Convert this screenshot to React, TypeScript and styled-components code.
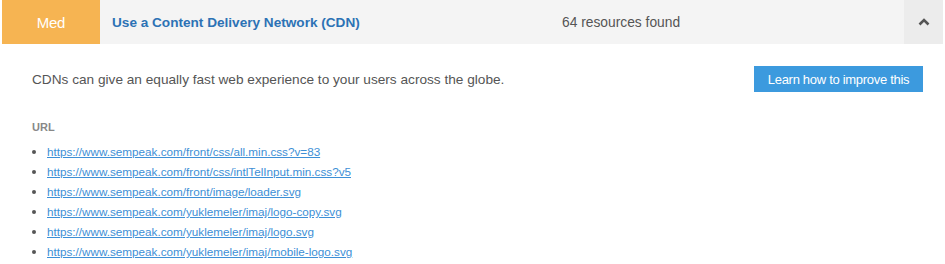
import React from "react";
import styled, { createGlobalStyle } from "styled-components";

const Global = createGlobalStyle`
  html, body { margin: 0; padding: 0; background: #fff; }
  body { font-family: "Liberation Sans", Arial, sans-serif; }
`;

const Panel = styled.div`
  margin: 0 2px;
  width: 941px;
`;

const Header = styled.div`
  display: grid;
  grid-template-columns: 98px 462px 1fr 39px;
  height: 44px;
  background: #f4f4f4;
  align-items: stretch;
`;

const Badge = styled.div`
  background: #f6b452;
  color: #fff;
  font-size: 15px;
  display: flex;
  align-items: center;
  justify-content: center;
  letter-spacing: -0.3px;
`;

const Title = styled.div`
  display: flex;
  align-items: center;
  padding-left: 12px;
  font-size: 13.6px;
  font-weight: bold;
  color: #2c72b5;
`;

const Count = styled.div`
  display: flex;
  align-items: center;
  font-size: 13.8px;
  color: #555;
`;

const Toggle = styled.div`
  background: #ececec;
  display: flex;
  align-items: center;
  justify-content: center;
`;

const Body = styled.div`
  padding: 22px 20px 0 30px;
`;

const Row = styled.div`
  display: flex;
  align-items: center;
  justify-content: space-between;
`;

const Desc = styled.p`
  margin: 0;
  font-size: 13.65px;
  color: #555;
`;

const Button = styled.a`
  display: inline-flex;
  align-items: center;
  justify-content: center;
  width: 169px;
  height: 26px;
  background: #3c9ade;
  color: #fff;
  font-size: 13px;
  text-decoration: none;
  letter-spacing: -0.3px;
`;

const Label = styled.div`
  margin-top: 29px;
  font-size: 11px;
  font-weight: bold;
  color: #888;
`;

const List = styled.ul`
  margin: 9px 0 0;
  padding-left: 15px;
  list-style: disc;
  color: #555;
`;

const Item = styled.li`
  font-size: 11.7px;
  line-height: 20px;
  &::marker { font-size: 13px; }
`;

const Link = styled.a`
  color: #3d8fd6;
  text-decoration: underline;
`;

const urls = [
  "https://www.sempeak.com/front/css/all.min.css?v=83",
  "https://www.sempeak.com/front/css/intlTelInput.min.css?v5",
  "https://www.sempeak.com/front/image/loader.svg",
  "https://www.sempeak.com/yuklemeler/imaj/logo-copy.svg",
  "https://www.sempeak.com/yuklemeler/imaj/logo.svg",
  "https://www.sempeak.com/yuklemeler/imaj/mobile-logo.svg",
];

export default function App() {
  return (
    <>
      <Global />
      <Panel>
        <Header>
          <Badge>Med</Badge>
          <Title>Use a Content Delivery Network (CDN)</Title>
          <Count>64 resources found</Count>
          <Toggle>
            <svg width="12" height="8" viewBox="0 0 12 8">
              <path d="M1.5 6.5 L6 2 L10.5 6.5" fill="none" stroke="#555" strokeWidth="2.6" />
            </svg>
          </Toggle>
        </Header>
        <Body>
          <Row>
            <Desc>CDNs can give an equally fast web experience to your users across the globe.</Desc>
            <Button href="#">Learn how to improve this</Button>
          </Row>
          <Label>URL</Label>
          <List>
            {urls.map((u) => (
              <Item key={u}>
                <Link href="#">{u}</Link>
              </Item>
            ))}
          </List>
        </Body>
      </Panel>
    </>
  );
}
